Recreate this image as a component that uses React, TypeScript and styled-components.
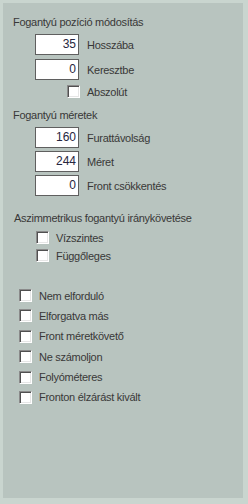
import React from "react";
import styled, { createGlobalStyle } from "styled-components";

const Global = createGlobalStyle`
  html, body { margin: 0; padding: 0; background: #c9d5cf; }
  body { font-family: "Liberation Sans", Arial, sans-serif; }
  * { box-sizing: border-box; }
`;

const Page = styled.div`
  width: 248px;
  height: 504px;
  padding: 3px 5px 6px 3px;
  background: #c9d5cf;
`;

const Panel = styled.div`
  width: 240px;
  height: 495px;
  background: #b8c4bf;
  padding: 12px 0 0 10px;
  display: flex;
  flex-direction: column;
  color: #383838;
  font-size: 11px;
  letter-spacing: -0.28px;
`;

const Title = styled.div<{ $mt?: number; $ml?: number }>`
  height: 14px;
  line-height: 14px;
  margin-top: ${(p) => p.$mt ?? 0}px;
  margin-left: ${(p) => p.$ml ?? 0}px;
  white-space: nowrap;
`;

const Fields = styled.div<{ $mt: number; $gap: number }>`
  display: flex;
  flex-direction: column;
  gap: ${(p) => p.$gap}px;
  margin-top: ${(p) => p.$mt}px;
  margin-left: 22px;
`;

const FieldRow = styled.div`
  display: flex;
  align-items: center;
  gap: 8px;
  height: 21px;
`;

const NumBox = styled.div`
  width: 44px;
  height: 21px;
  background: #ffffff;
  border: 1px solid #5f5f5f;
  text-align: right;
  padding-right: 2px;
  line-height: 19px;
  font-size: 12px;
  letter-spacing: 0;
  color: #262640;
`;

const Label = styled.span`
  white-space: nowrap;
  line-height: 14px;
`;

const CheckRow = styled.label<{ $ml: number; $mt?: number }>`
  display: flex;
  align-items: center;
  gap: 7px;
  height: 13px;
  margin-left: ${(p) => p.$ml}px;
  margin-top: ${(p) => p.$mt ?? 0}px;
`;

const Box = styled.input.attrs({ type: "checkbox" })`
  appearance: none;
  -webkit-appearance: none;
  margin: 0;
  width: 13px;
  height: 13px;
  flex: none;
  background: #ffffff;
  border: 1px solid;
  border-color: #8a8a8a #ffffff #ffffff #8a8a8a;
  box-shadow: inset 1px 1px 0 #505050, inset -1px -1px 0 #e6e6e6;
`;

const CheckList = styled.div<{ $mt: number; $gap: number }>`
  display: flex;
  flex-direction: column;
  gap: ${(p) => p.$gap}px;
  margin-top: ${(p) => p.$mt}px;
`;

const lower = [
  "Nem elforduló",
  "Elforgatva más",
  "Front méretkövető",
  "Ne számoljon",
  "Folyóméteres",
  "Fronton élzárást kivált",
];

export default function App() {
  return (
    <Page>
      <Global />
      <Panel>
        <Title>Fogantyú pozíció módosítás</Title>
        <Fields $mt={5} $gap={4}>
          <FieldRow>
            <NumBox>35</NumBox>
            <Label>Hosszába</Label>
          </FieldRow>
          <FieldRow>
            <NumBox>0</NumBox>
            <Label>Keresztbe</Label>
          </FieldRow>
        </Fields>
        <CheckRow $ml={54} $mt={5}>
          <Box />
          <Label>Abszolút</Label>
        </CheckRow>
        <Title $mt={10}>Fogantyú méretek</Title>
        <Fields $mt={5} $gap={3}>
          <FieldRow>
            <NumBox>160</NumBox>
            <Label>Furattávolság</Label>
          </FieldRow>
          <FieldRow>
            <NumBox>244</NumBox>
            <Label>Méret</Label>
          </FieldRow>
          <FieldRow>
            <NumBox>0</NumBox>
            <Label>Front csökkentés</Label>
          </FieldRow>
        </Fields>
        <Title $mt={15} $ml={1}>Aszimmetrikus fogantyú iránykövetése</Title>
        <CheckList $mt={6} $gap={5}>
          <CheckRow $ml={23}>
            <Box />
            <Label>Vízszintes</Label>
          </CheckRow>
          <CheckRow $ml={23}>
            <Box />
            <Label>Függőleges</Label>
          </CheckRow>
        </CheckList>
        <CheckList $mt={27} $gap={7.4}>
          {lower.map((t) => (
            <CheckRow key={t} $ml={6}>
              <Box />
              <Label>{t}</Label>
            </CheckRow>
          ))}
        </CheckList>
      </Panel>
    </Page>
  );
}
